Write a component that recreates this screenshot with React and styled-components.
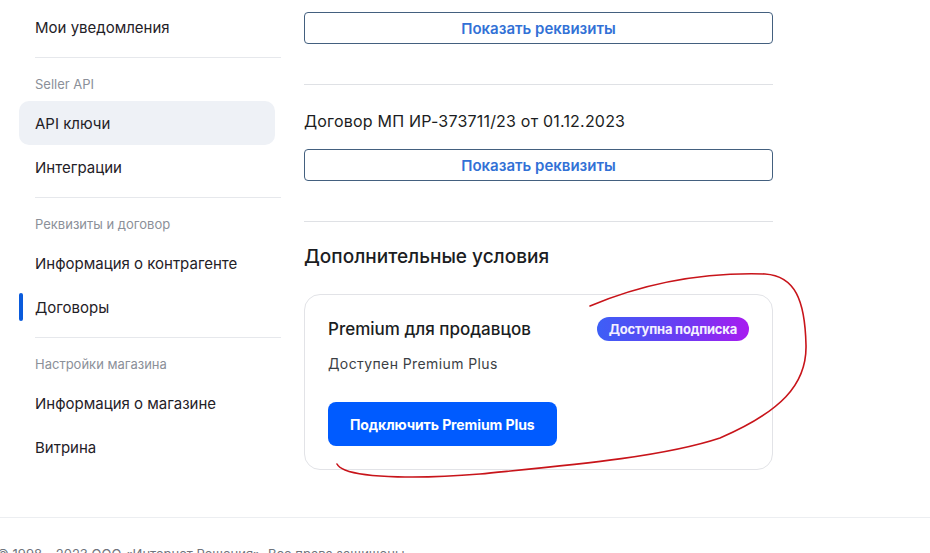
import React from "react";
import styled, { createGlobalStyle } from "styled-components";

const GlobalStyle = createGlobalStyle`
  html, body {
    margin: 0;
    padding: 0;
    background: #fff;
    overflow: hidden;
  }
  body {
    font-family: Inter, "Noto Sans", sans-serif;
    color: #1b1d22;
  }
`;

const Page = styled.div`
  position: relative;
  width: 930px;
  height: 553px;
  overflow: hidden;
`;

const Layout = styled.div`
  display: flex;
  gap: 23px;
  padding-left: 19px;
`;

const Sidebar = styled.aside`
  width: 262px;
  padding-top: 5px;
  display: flex;
  flex-direction: column;
`;

const NavItem = styled.div`
  position: relative;
  height: 44px;
  margin-right: 6px;
  padding: 0 16px;
  display: flex;
  align-items: center;
  border-radius: 10px;
  font-size: 15px;
  color: #1f2127;
  background: ${(p) => (p.hovered ? "#eef1f6" : "transparent")};

  &::before {
    content: "";
    display: ${(p) => (p.active ? "block" : "none")};
    position: absolute;
    left: 0;
    top: 8px;
    width: 4px;
    height: 28px;
    border-radius: 2px;
    background: #0a5bdc;
  }
`;

const NavDivider = styled.div`
  height: 1px;
  margin: 8px 0 0 16px;
  background: #e6e8ec;
`;

const NavSection = styled.div`
  padding: 16px 16px 0;
  margin-bottom: 7px;
  font-size: 13px;
  line-height: 20px;
  color: #8b9099;
`;

const Main = styled.main`
  width: 469px;
  display: flex;
  flex-direction: column;
`;

const OutlineButton = styled.button`
  height: 32px;
  margin-top: ${(p) => p.top || 0}px;
  border: 1px solid #43607f;
  border-radius: 4px;
  background: #fff;
  font-family: Inter, sans-serif;
  font-size: 15px;
  font-weight: 600;
  color: #3271d6;
`;

const Divider = styled.div`
  height: 1px;
  margin-top: 40px;
  background: #dfe1e5;
`;

const ContractTitle = styled.div`
  margin-top: 24px;
  font-size: 16px;
  line-height: 24px;
  letter-spacing: 0.2px;
  color: #1b1d22;
`;

const Heading = styled.h2`
  margin: 21px 0 0;
  font-size: 19px;
  line-height: 28px;
  font-weight: 500;
  color: #1b1d22;
`;

const Card = styled.div`
  margin-top: 23px;
  padding: 22px 23px 23px;
  border: 1px solid #e2e3e7;
  border-radius: 16px;
  display: flex;
  flex-direction: column;
  align-items: flex-start;
`;

const CardHead = styled.div`
  align-self: stretch;
  display: flex;
  align-items: center;
  justify-content: space-between;
  height: 24px;
`;

const CardTitle = styled.div`
  font-size: 17px;
  font-weight: 500;
  line-height: 24px;
`;

const Badge = styled.span`
  height: 24px;
  padding: 0 12px;
  display: inline-flex;
  align-items: center;
  border-radius: 12px;
  background: linear-gradient(90deg, #3d5ff6 0%, #6a3cf3 55%, #a81cf0 100%);
  color: #f4f0ff;
  font-size: 13px;
  font-weight: 700;
  letter-spacing: -0.2px;
`;

const CardText = styled.div`
  margin-top: 13px;
  font-size: 14px;
  line-height: 20px;
  letter-spacing: 0.4px;
  color: #3c3f45;
`;

const PrimaryButton = styled.button`
  margin-top: 28px;
  height: 44px;
  padding: 0 22px;
  border: none;
  border-radius: 8px;
  background: #005bff;
  color: #fff;
  font-family: Inter, sans-serif;
  font-size: 14px;
  font-weight: 700;
  letter-spacing: -0.1px;
`;

const Footer = styled.footer`
  margin-top: 47px;
  border-top: 1px solid #eceef1;
  padding: 28px 0 0;
  font-size: 13px;
  color: #6f747c;
  text-indent: -3px;
  white-space: nowrap;
`;

const Scribble = styled.svg`
  position: absolute;
  left: 0;
  top: 0;
  pointer-events: none;
`;

const navGroups = [
  { items: ["Мои уведомления"] },
  { title: "Seller API", items: ["API ключи", "Интеграции"] },
  { title: "Реквизиты и договор", items: ["Информация о контрагенте", "Договоры"] },
  { title: "Настройки магазина", items: ["Информация о магазине", "Витрина"] },
];

const App = () => {
  return (
    <Page>
      <GlobalStyle />
      <Layout>
        <Sidebar>
          {navGroups.map((group, gi) => (
            <React.Fragment key={gi}>
              {gi > 0 && <NavDivider />}
              {group.title && <NavSection>{group.title}</NavSection>}
              {group.items.map((item) => (
                <NavItem
                  key={item}
                  hovered={item === "API ключи"}
                  active={item === "Договоры"}
                >
                  {item}
                </NavItem>
              ))}
            </React.Fragment>
          ))}
        </Sidebar>
        <Main>
          <OutlineButton top={12}>Показать реквизиты</OutlineButton>
          <Divider />
          <ContractTitle>Договор МП ИР-373711/23 от 01.12.2023</ContractTitle>
          <OutlineButton top={16}>Показать реквизиты</OutlineButton>
          <Divider />
          <Heading>Дополнительные условия</Heading>
          <Card>
            <CardHead>
              <CardTitle>Premium для продавцов</CardTitle>
              <Badge>Доступна подписка</Badge>
            </CardHead>
            <CardText>Доступен Premium Plus</CardText>
            <PrimaryButton>Подключить Premium Plus</PrimaryButton>
          </Card>
        </Main>
      </Layout>
      <Footer>© 1998 – 2023 ООО «Интернет Решения». Все права защищены.</Footer>
      <Scribble width="930" height="553" viewBox="0 0 930 553">
        <path
          d="M590 306 C 640 285, 700 272, 765 274 C 795 276, 805 300, 806 345 C 807 385, 780 412, 720 438 C 660 458, 560 466, 480 474 C 420 479, 365 478, 345 470 C 340 468, 338 466, 337 464"
          fill="none"
          stroke="#c8141a"
          strokeWidth="1.6"
          strokeLinecap="round"
        />
      </Scribble>
    </Page>
  );
};

export default App;
